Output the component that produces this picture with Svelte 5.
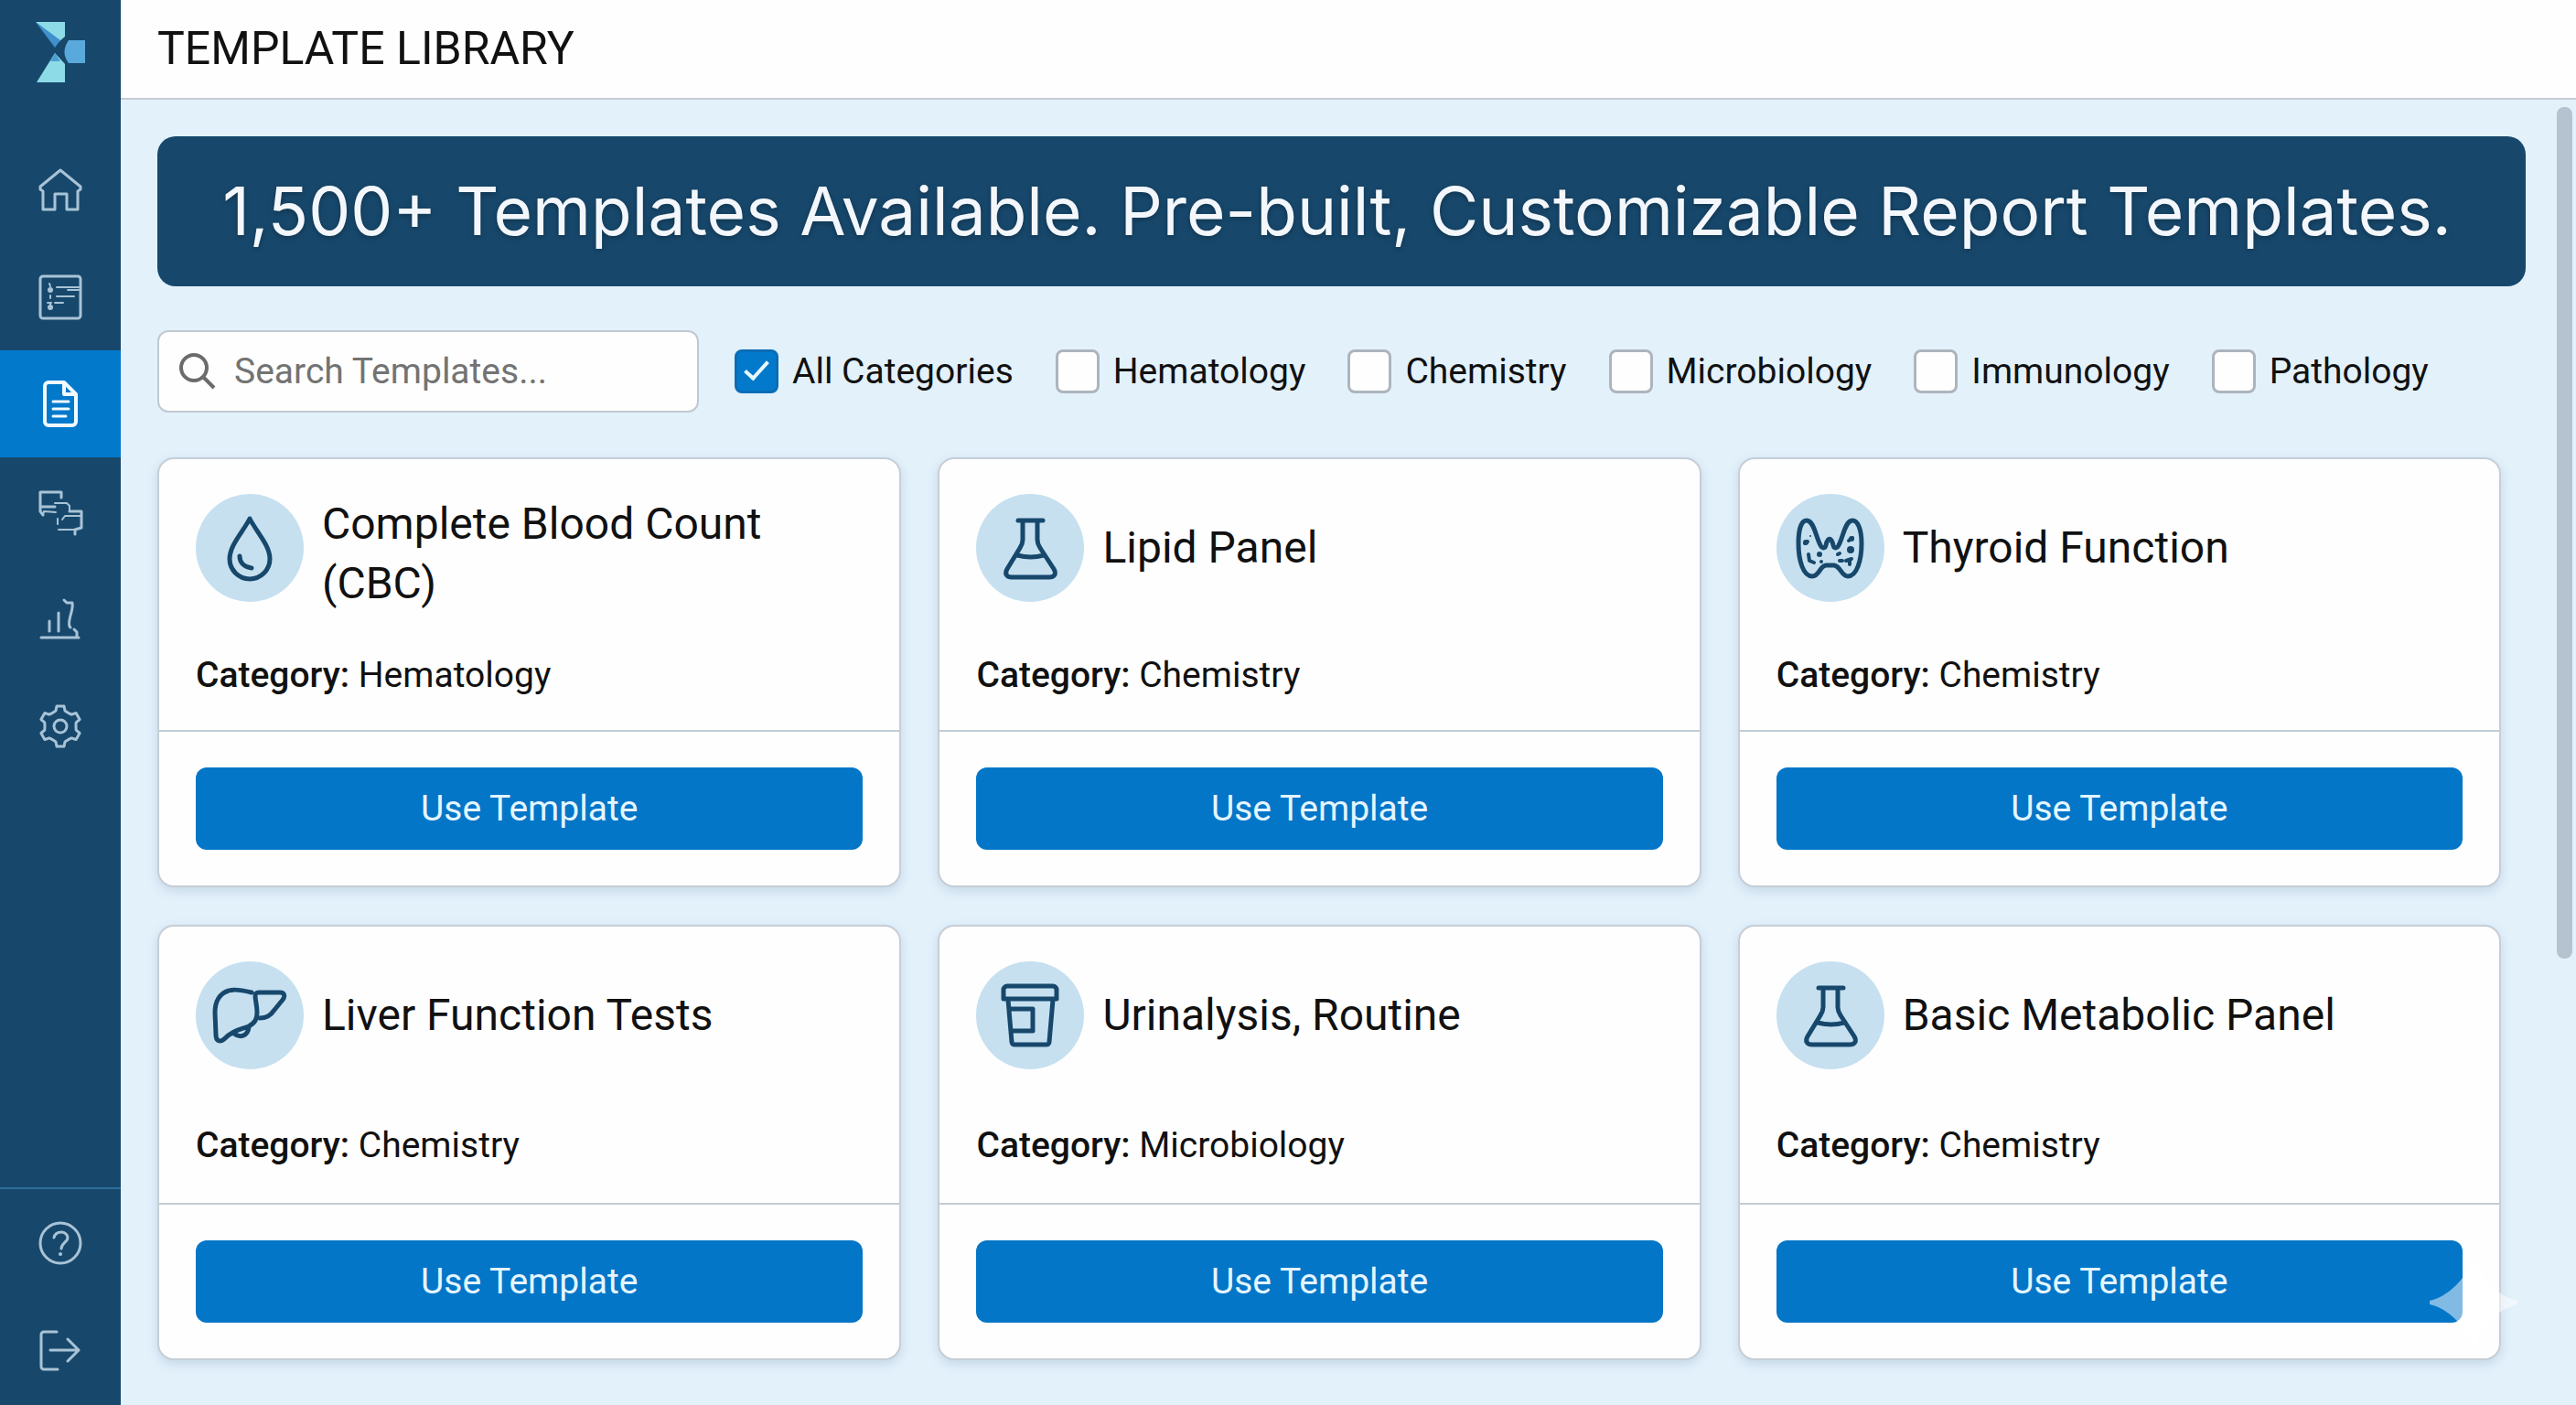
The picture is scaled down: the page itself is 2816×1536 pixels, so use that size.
<script>
  // outline of a six-toothed cog on a 48px grid
  function cog(cx, cy) {
    const tooth = [[-8, -15], [-5, -17], [-4, -22], [4, -22], [5, -17], [8, -15]];
    const points = [];
    for (let i = 0; i < 6; i++) {
      const a = (i * Math.PI) / 3;
      for (const [x, y] of tooth) {
        const px = cx + x * Math.cos(a) - y * Math.sin(a);
        const py = cy + x * Math.sin(a) + y * Math.cos(a);
        points.push(`${px.toFixed(1)} ${py.toFixed(1)}`);
      }
    }
    return `M${points.join('L')}z`;
  }

  const nav = [
    { label: 'Home', d: 'M2 20 24 2l22 18v3l-3 2v20H31V28H18v17H5V25l-3-2z' },
    {
      label: 'Worklist',
      d: 'M5 1h38a3 3 0 0 1 3 3v40a3 3 0 0 1-3 3H5a3 3 0 0 1-3-3V4a3 3 0 0 1 3-3z',
      thin: 'M20 13h24M32 16h12M20 23h19M10 30h4M18 30h9M12 9l1 3M13 22v3M13 30v4',
      dots: [[13, 16, 3], [13, 35, 3]],
    },
    {
      label: 'Templates',
      d: 'M11 0h17l13 13v30a4 4 0 0 1-4 4H11a4 4 0 0 1-4-4V4a4 4 0 0 1 4-4zM28 0v13h13',
      thin: 'M16 21h17M16 29h17M16 37h14',
    },
    {
      label: 'Messages',
      d: 'M25 9V3H2v16h16M2 19v5l3 4M34 24h13v18l-7 2v5',
      thin: 'M5 28l1-4 13 1M18 15h13l3 3v6M40 44H22M26 33l3-4h17M21 32v6',
    },
    {
      label: 'Analytics',
      d: 'M3 45h41M12 27v11M22 18v20M28 4l3 3h6c1 5-1 10-2 14s-3 11 0 13M39 36l3 3v5',
    },
    { label: 'Settings', d: cog(24, 25) + 'M31 25a7 7 0 1 1-14 0 7 7 0 1 1 14 0z' },
  ];

  const footerNav = [
    {
      label: 'Help',
      d: 'M46 24a22 22 0 1 1-44 0 22 22 0 1 1 44 0zM17 18c1-4 4-6 8-6 4 0 7 3 7 6 0 5-7 6-7 12',
      dots: [[24, 36, 2]],
    },
    { label: 'Log out', d: 'M20 4H6a3 3 0 0 0-3 3v35a3 3 0 0 0 3 3h15M13 24h31M32 12l12 12-12 12' },
  ];

  const flask = {
    d: 'M46 29h27M51 29v21c0 3-1 6-3 9L34 82c-3 5-1 9 5 9h41c6 0 8-4 5-9L70 59c-2-3-3-6-3-9V29M45 67q15 4 29 0',
  };

  const templates = [
    {
      name: 'Complete Blood Count (CBC)',
      category: 'Hematology',
      icon: { d: 'M59 27C52 41 37 56 37 71a22 22 0 0 0 44 0C81 56 66 41 59 27zM48 68c0 7 5 12 13 13' },
    },
    { name: 'Lipid Panel', category: 'Chemistry', icon: flask },
    {
      name: 'Thyroid Function',
      category: 'Chemistry',
      icon: {
        d: 'M33 29c-6 0-9 10-9 25 0 18 5 36 15 36 8 0 8-11 15-12h9c7 1 8 12 15 12 10 0 15-18 15-36 0-15-4-25-10-25-8 0-10 18-15 27-2 4-5 4-6 0-2-9-6-9-8 0-1 4-4 4-6 0-5-9-7-27-15-27z',
        thin: 'M31 54l3-2M35 66l1 7 5 2M79 51l4-3M67 66l2-1M69 73h3M76 73l6-2M80 73v4',
        dots: [[32, 53, 3], [37, 46, 1], [47, 66, 3], [49, 74, 2], [82, 49, 3], [81, 61, 4]],
      },
    },
    {
      name: 'Liver Function Tests',
      category: 'Chemistry',
      icon: {
        d: 'M61 34C49 31 42 30 36 32 26 35 21 44 21 56l1 24c0 7 4 9 9 5 10-10 17-10 27-14 7-4 9-8 9-15 0-8-2-14-2-18 0-3 1-4 4-4h23c5 0 6 4 3 8L86 53c-4 6-8 9-16 9M42 79c6 5 15 3 16-7',
      },
    },
    {
      name: 'Urinalysis, Routine',
      category: 'Microbiology',
      icon: { d: 'M30 41V31a4 4 0 0 1 4-4h50a4 4 0 0 1 4 4v10zM35 42l4 46a3 3 0 0 0 3 3h35a3 3 0 0 0 3-3l4-46M36 52h26v24H39' },
    },
    { name: 'Basic Metabolic Panel', category: 'Chemistry', icon: flask },
  ];

  let query = $state('');
  let filters = $state([
    { name: 'All Categories', checked: true },
    { name: 'Hematology', checked: false },
    { name: 'Chemistry', checked: false },
    { name: 'Microbiology', checked: false },
    { name: 'Immunology', checked: false },
    { name: 'Pathology', checked: false },
  ]);
</script>

{#snippet shapes(icon)}
  <path d={icon.d} />
  {#if icon.thin}<path class="thin" d={icon.thin} />{/if}
  {#each icon.dots ?? [] as [cx, cy, r]}
    <circle class="dot" {cx} {cy} {r} />
  {/each}
{/snippet}

{#snippet navLink(item)}
  <a href="#top" class:active={item.label === 'Templates'} aria-label={item.label}>
    <svg viewBox="0 0 48 48">{@render shapes(item)}</svg>
  </a>
{/snippet}

<div class="app">
  <aside>
    <svg class="logo" viewBox="0 0 56 68" aria-hidden="true">
      <path fill="#8edbe8" d="M0 0h32v16l-7 6z" />
      <path fill="#3f90cc" d="M0 0l27 20-6 8z" />
      <path fill="#5aa9dd" d="M36 20h18v25H36q-9-12 0-25z" />
      <path fill="#8edbe8" d="M21 34l11 12v20H1z" />
      <path fill="#4c9fd3" d="M21 34l6 9H16z" />
    </svg>
    <nav>
      {#each nav as item}
        {@render navLink(item)}
      {/each}
    </nav>
    <nav class="bottom">
      {#each footerNav as item}
        {@render navLink(item)}
      {/each}
    </nav>
  </aside>

  <div class="main">
    <header><h1>TEMPLATE LIBRARY</h1></header>

    <div class="content">
      <main>
        <p class="banner">1,500+ Templates Available. Pre-built, Customizable Report Templates.</p>

        <div class="filters">
          <label class="search">
            <svg viewBox="0 0 40 40" aria-hidden="true">
              <circle cx="16" cy="16" r="14" />
              <path d="M26 26l12 12" />
            </svg>
            <input type="text" placeholder="Search Templates..." aria-label="Search templates" bind:value={query} />
          </label>
          {#each filters as filter}
            <label class="check">
              <input type="checkbox" bind:checked={filter.checked} />
              {filter.name}
            </label>
          {/each}
        </div>

        <div class="grid">
          {#each templates as template}
            <article>
              <div class="head">
                <svg viewBox="0 0 118 118" aria-hidden="true">{@render shapes(template.icon)}</svg>
                <h2>{template.name}</h2>
              </div>
              <p class="category"><span><b>Category:</b> {template.category}</span></p>
              <div class="action">
                <button type="button">Use Template</button>
              </div>
            </article>
          {/each}
        </div>
      </main>

      <div class="track"><div class="thumb"></div></div>
    </div>
  </div>

  <svg class="sparkle" viewBox="0 0 96 96" aria-hidden="true">
    <path d="M0 46C20 42 42 20 46 0h4c4 20 26 42 46 46v4c-20 4-42 26-46 46h-4C42 76 20 54 0 50z" />
  </svg>
</div>

<style>
  :global(*, *::before, *::after) { box-sizing: border-box; margin: 0; padding: 0; }

  :global(body) {
    font-family: Roboto, 'Liberation Sans', sans-serif;
    font-size: 39px;
    color: #111;
    background: #e3f1fb;
  }

  .app {
    display: flex;
    min-height: 100vh;
  }

  aside {
    display: flex;
    flex-direction: column;
    flex: none;
    width: 132px;
    background: #17486c;
  }

  .logo {
    width: 56px;
    height: 68px;
    margin: 24px 0 57px 39px;
  }

  nav a {
    display: flex;
    align-items: center;
    justify-content: center;
    height: 117px;
    color: #a9c3d6;
  }

  nav svg {
    width: 48px;
    height: 48px;
    overflow: visible;
  }

  nav path, .head path {
    fill: none;
    stroke: currentColor;
    stroke-width: 3;
    stroke-linecap: round;
    stroke-linejoin: round;
  }

  nav .thin { stroke-width: 2; }
  .dot { fill: currentColor; }

  nav .active {
    background: #0379cc;
    color: #f0faff;
  }

  .active path { stroke-width: 4; }
  .active .thin { stroke-width: 3; }

  .bottom {
    margin-top: auto;
    padding-bottom: 2px;
    border-top: 2px solid #2f6d98;
  }

  .main {
    display: flex;
    flex-direction: column;
    flex: 1;
    min-width: 0;
  }

  header {
    padding: 21px 40px 22px;
    background: #fefefe;
    border-bottom: 2px solid #c3ccd4;
  }

  h1 {
    font-size: 50px;
    font-weight: 400;
    line-height: 64px;
  }

  .content {
    display: flex;
    flex: 1;
  }

  main {
    flex: 1;
    min-width: 0;
    padding: 40px 34px 48px 40px;
  }

  .banner {
    padding: 34px 50px 34px 40px;
    border-radius: 20px;
    background: #17486c;
    color: #f3f7fb;
    font-family: Inter, Roboto, sans-serif;
    font-size: 73px;
    line-height: 96px;
    text-align: center;
    text-shadow: 0 2px 6px rgba(0, 0, 0, 0.3);
  }

  .filters {
    display: flex;
    align-items: center;
    gap: 46px;
    margin: 48px 0 49px;
  }

  .search {
    display: flex;
    align-items: center;
    flex: none;
    gap: 20px;
    width: 592px;
    height: 90px;
    margin-right: -7px;
    padding: 0 22px;
    background: #fefefe;
    border: 2px solid #c0c9d1;
    border-radius: 12px;
  }

  .search svg {
    flex: none;
    width: 40px;
    height: 40px;
    fill: none;
    stroke: #6b6b6b;
    stroke-width: 4;
  }

  .search input {
    width: 100%;
    border: none;
    outline: none;
    background: none;
    font: inherit;
    color: inherit;
  }

  .search input::placeholder { color: #737373; opacity: 1; }

  .check {
    display: flex;
    align-items: center;
    gap: 15px;
    white-space: nowrap;
  }

  .check input {
    appearance: none;
    display: grid;
    place-items: center;
    width: 48px;
    height: 48px;
    background: #fefefe;
    border: 3px solid #adb5bc;
    border-radius: 8px;
  }

  .check input:checked {
    background: #0379cc;
    border-color: #0a6db5;
  }

  .check input:checked::before {
    content: '';
    width: 14px;
    height: 26px;
    margin-bottom: 8px;
    border: solid #e8f8ff;
    border-width: 0 4px 4px 0;
    rotate: 42deg;
  }

  .grid {
    display: grid;
    grid-template-columns: 39fr 40fr 40fr;
    grid-template-rows: minmax(470px, auto) minmax(476px, auto);
    gap: 41px 40px;
    margin-right: 27px;
  }

  article {
    display: flex;
    flex-direction: column;
    background: #fefefe;
    border: 2px solid #c6ced6;
    border-radius: 18px;
    box-shadow: 0 4px 12px rgba(60, 100, 140, 0.18);
  }

  .head {
    display: flex;
    align-items: flex-start;
    gap: 20px;
    height: 118px;
    margin: 38px 40px 0;
  }

  .head svg {
    flex: none;
    width: 118px;
    height: 118px;
    border-radius: 50%;
    background: #c6e0f0;
    color: #17486c;
  }

  .head path { stroke-width: 5; }
  .head .thin { stroke-width: 4; }

  h2 {
    display: flex;
    align-items: center;
    min-height: 116px;
    font-size: 48px;
    font-weight: 400;
    line-height: 65px;
  }

  .category {
    display: flex;
    align-items: center;
    flex: 1;
    padding: 19px 40px 0;
  }

  .category b { font-weight: 500; }

  .action {
    padding: 39px 40px;
    border-top: 2px solid #c3ccd4;
  }

  button {
    width: 100%;
    height: 90px;
    border: none;
    border-radius: 12px;
    background: #0376c8;
    color: #e4f5ff;
    font: inherit;
    cursor: pointer;
  }

  .track {
    flex: none;
    width: 21px;
    padding: 8px 4px 0 0;
  }

  .thumb {
    height: calc(66% - 6px);
    border-radius: 8px;
    background: #b4c3cf;
  }

  .sparkle {
    position: fixed;
    right: 64px;
    bottom: 64px;
    width: 96px;
    height: 96px;
    fill: #fff;
    opacity: 0.5;
    pointer-events: none;
  }
</style>
